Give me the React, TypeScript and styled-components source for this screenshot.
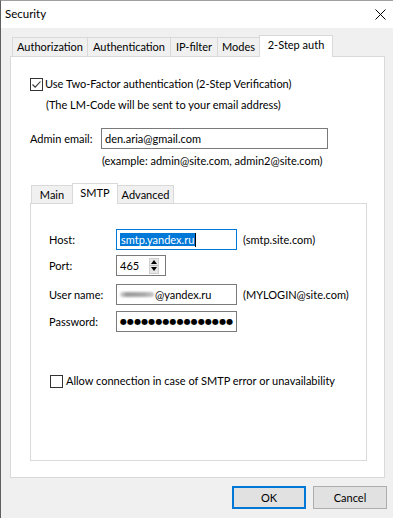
import React from "react";
import styled, { createGlobalStyle } from "styled-components";

const Global = createGlobalStyle`
  html, body { margin: 0; padding: 0; background: #f0f0f0; }
  body { font-family: Lato, "Noto Sans", sans-serif; font-size: 11px; color: #000; white-space: nowrap; }
  * { box-sizing: border-box; }
`;

const Window = styled.div`
  width: 393px;
  height: 518px;
  display: flex;
  flex-direction: column;
  border-left: 1px solid #5f5f5f;
  border-top: 1px solid #a0a0a0;
  background: #f0f0f0;
  overflow: hidden;
`;

const TitleBar = styled.div`
  height: 27px;
  flex: none;
  background: #fff;
  display: flex;
  align-items: center;
  justify-content: space-between;
  padding: 0 7px 0 4px;
`;

const Title = styled.span`
  font-size: 11.5px;
  line-height: 16px;
  margin-top: -1px;
`;

const CloseIcon = () => (
  <svg width="11" height="11" viewBox="0 0 11 11" style={{ display: "block" }}>
    <path d="M0.5 0.5 L10.5 10.5 M10.5 0.5 L0.5 10.5" stroke="#000" strokeWidth="1" fill="none" />
  </svg>
);

const CloseButton = styled.div`
  width: 11px;
  height: 11px;
  margin-top: -1px;
`;

const Body = styled.div`
  flex: 1;
  display: flex;
  flex-direction: column;
  padding: 7px 8px 9px 9px;
`;

const TabStrip = styled.div<{ $pad: number }>`
  display: flex;
  align-items: flex-end;
  height: 21px;
  flex: none;
  padding-left: ${(p) => p.$pad}px;
  position: relative;
  z-index: 1;
`;

const Tab = styled.div<{ $w: number; $active?: boolean; $h: number }>`
  width: ${(p) => p.$w}px;
  height: ${(p) => (p.$active ? p.$h + 3 : p.$h)}px;
  margin-bottom: ${(p) => (p.$active ? -1 : 0)}px;
  margin-left: -1px;
  &:first-child { margin-left: 0; }
  border: 1px solid #d9d9d9;
  border-bottom: none;
  background: ${(p) => (p.$active ? "#fff" : "#f0f0f0")};
  position: relative;
  z-index: ${(p) => (p.$active ? 2 : 1)};
  display: flex;
  align-items: center;
  justify-content: center;
  line-height: 16px;
  padding-bottom: ${(p) => (p.$active ? 3 : 0)}px;
`;

const Panel = styled.div`
  height: 422px;
  flex: none;
  background: #fff;
  border: 1px solid #d9d9d9;
  padding: 19px 17px 17px 19px;
  display: flex;
  flex-direction: column;
`;

const CheckRow = styled.label<{ $indent?: number }>`
  display: flex;
  align-items: center;
  gap: 2px;
  height: 16px;
  line-height: 16px;
  margin-left: ${(p) => p.$indent ?? 0}px;
`;

const Box = styled.span`
  width: 13px;
  height: 13px;
  border: 1px solid #333;
  background: #fff;
  display: inline-flex;
  align-items: center;
  justify-content: center;
  flex: none;
`;

const CheckMark = () => (
  <svg width="11" height="11" viewBox="0 0 11 11" style={{ display: "block" }}>
    <path d="M1.5 5.5 L4.2 8.2 L9.5 2.5" stroke="#333" strokeWidth="1.1" fill="none" />
  </svg>
);

const Note = styled.div<{ $left: number; $top: number }>`
  margin-left: ${(p) => p.$left}px;
  margin-top: ${(p) => p.$top}px;
  line-height: 16px;
  height: 16px;
`;

const EmailRow = styled.div`
  display: flex;
  align-items: center;
  margin-top: 15px;
  height: 21px;
`;

const RowLabel = styled.span<{ $w: number }>`
  width: ${(p) => p.$w}px;
  flex: none;
  line-height: 16px;
`;

const TextInput = styled.div<{ $w: number; $focus?: boolean }>`
  width: ${(p) => p.$w}px;
  height: 21px;
  border: 1px solid ${(p) => (p.$focus ? "#0078d7" : "#7a7a7a")};
  background: #fff;
  display: flex;
  align-items: center;
  padding-left: 3px;
  line-height: 16px;
  overflow: hidden;
  flex: none;
`;

const InnerArea = styled.div`
  margin-top: 13px;
  display: flex;
  flex-direction: column;
`;

const InnerPanel = styled.div`
  height: 258px;
  border: 1px solid #d9d9d9;
  background: #fff;
  padding: 25px 10px 0 18px;
  display: flex;
  flex-direction: column;
`;

const FieldRow = styled.div<{ $top: number }>`
  display: flex;
  align-items: center;
  margin-top: ${(p) => p.$top}px;
  height: 21px;
`;

const Hint = styled.span`
  margin-left: 6px;
  line-height: 16px;
`;

const Selected = styled.span`
  background: #0078d7;
  color: #fff;
  line-height: 13px;
  height: 13px;
  display: inline-flex;
  align-items: center;
  padding: 0 1px;
`;

const Caret = styled.span`
  width: 1px;
  height: 14px;
  background: #000;
`;

const Spinner = styled.div`
  width: 50px;
  height: 21px;
  border: 1px solid #7a7a7a;
  background: #fff;
  display: flex;
  align-items: center;
  justify-content: space-between;
  padding: 0 6px 0 3px;
  flex: none;
`;

const SpinButtons = styled.div`
  width: 10px;
  height: 16px;
  display: flex;
  flex-direction: column;
  background: #e6e6e6;
  border: 1px solid #cfcfcf;
`;

const SpinHalf = styled.div<{ $down?: boolean }>`
  flex: 1;
  display: flex;
  align-items: center;
  justify-content: center;
  border-top: ${(p) => (p.$down ? "1px solid #bdbdbd" : "none")};
  &::before {
    content: "";
    width: 0;
    height: 0;
    border-left: 3.5px solid transparent;
    border-right: 3.5px solid transparent;
    ${(p) => (p.$down ? "border-top: 4px solid #000;" : "border-bottom: 4px solid #000;")}
  }
`;

const Smudge = styled.span`
  display: inline-block;
  width: 34px;
  height: 5px;
  margin-right: 1px;
  background: linear-gradient(90deg, #d8d8d8, #9a9a9a 20%, #a8a8a8 70%, #c8c8c8);
  filter: blur(1px);
  border-radius: 2px;
`;

const Dots = styled.span`
  font-size: 8px;
  letter-spacing: 0.1px;
  font-family: "DejaVu Sans", sans-serif;
`;

const AllowRow = styled(CheckRow)`
  margin-top: 41px;
  margin-left: 1px;
  gap: 3px;
`;

const ButtonRow = styled.div`
  margin-top: 8px;
  margin-right: -2px;
  display: flex;
  justify-content: flex-end;
  gap: 7px;
`;

const Button = styled.div<{ $default?: boolean }>`
  width: 74px;
  height: 23px;
  background: #e1e1e1;
  border: ${(p) => (p.$default ? "2px solid #0078d7" : "1px solid #adadad")};
  display: flex;
  align-items: center;
  justify-content: center;
  line-height: 16px;
`;

export default function App() {
  return (
    <>
      <Global />
      <Window>
        <TitleBar>
          <Title>Security</Title>
          <CloseButton>
            <CloseIcon />
          </CloseButton>
        </TitleBar>
        <Body>
          <TabStrip $pad={2}>
            <Tab $w={76} $h={19}>Authorization</Tab>
            <Tab $w={84} $h={19}>Authentication</Tab>
            <Tab $w={48} $h={19}>IP-filter</Tab>
            <Tab $w={43} $h={19}>Modes</Tab>
            <Tab $w={74} $h={19} $active>2-Step auth</Tab>
          </TabStrip>
          <Panel>
            <CheckRow>
              <Box>
                <CheckMark />
              </Box>
              <span>Use Two-Factor authentication (2-Step Verification)</span>
            </CheckRow>
            <Note $left={16} $top={5}>(The LM-Code will be sent to your email address)</Note>
            <EmailRow>
              <RowLabel $w={71}>Admin email:</RowLabel>
              <TextInput $w={227}>den.aria@gmail.com</TextInput>
            </EmailRow>
            <Note $left={72} $top={4}>(example: admin@site.com, admin2@site.com)</Note>
            <InnerArea>
              <TabStrip $pad={1}>
                <Tab $w={42} $h={18}>Main</Tab>
                <Tab $w={46} $h={18} $active>SMTP</Tab>
                <Tab $w={57} $h={18}>Advanced</Tab>
              </TabStrip>
              <InnerPanel>
                <FieldRow $top={0}>
                  <RowLabel $w={67}>Host:</RowLabel>
                  <TextInput $w={121} $focus>
                    <Selected>smtp.yandex.ru</Selected>
                    <Caret />
                  </TextInput>
                  <Hint>(smtp.site.com)</Hint>
                </FieldRow>
                <FieldRow $top={5}>
                  <RowLabel $w={67}>Port:</RowLabel>
                  <Spinner>
                    <span>465</span>
                    <SpinButtons>
                      <SpinHalf />
                      <SpinHalf $down />
                    </SpinButtons>
                  </Spinner>
                </FieldRow>
                <FieldRow $top={8}>
                  <RowLabel $w={67}>User name:</RowLabel>
                  <TextInput $w={121}>
                    <Smudge />
                    <span>@yandex.ru</span>
                  </TextInput>
                  <Hint>(MYLOGIN@site.com)</Hint>
                </FieldRow>
                <FieldRow $top={6}>
                  <RowLabel $w={67}>Password:</RowLabel>
                  <TextInput $w={121}>
                    <Dots>●●●●●●●●●●●●●●●●</Dots>
                  </TextInput>
                </FieldRow>
                <AllowRow>
                  <Box />
                  <span>Allow connection in case of SMTP error or unavailability</span>
                </AllowRow>
              </InnerPanel>
            </InnerArea>
          </Panel>
          <ButtonRow>
            <Button $default>OK</Button>
            <Button>Cancel</Button>
          </ButtonRow>
        </Body>
      </Window>
    </>
  );
}
